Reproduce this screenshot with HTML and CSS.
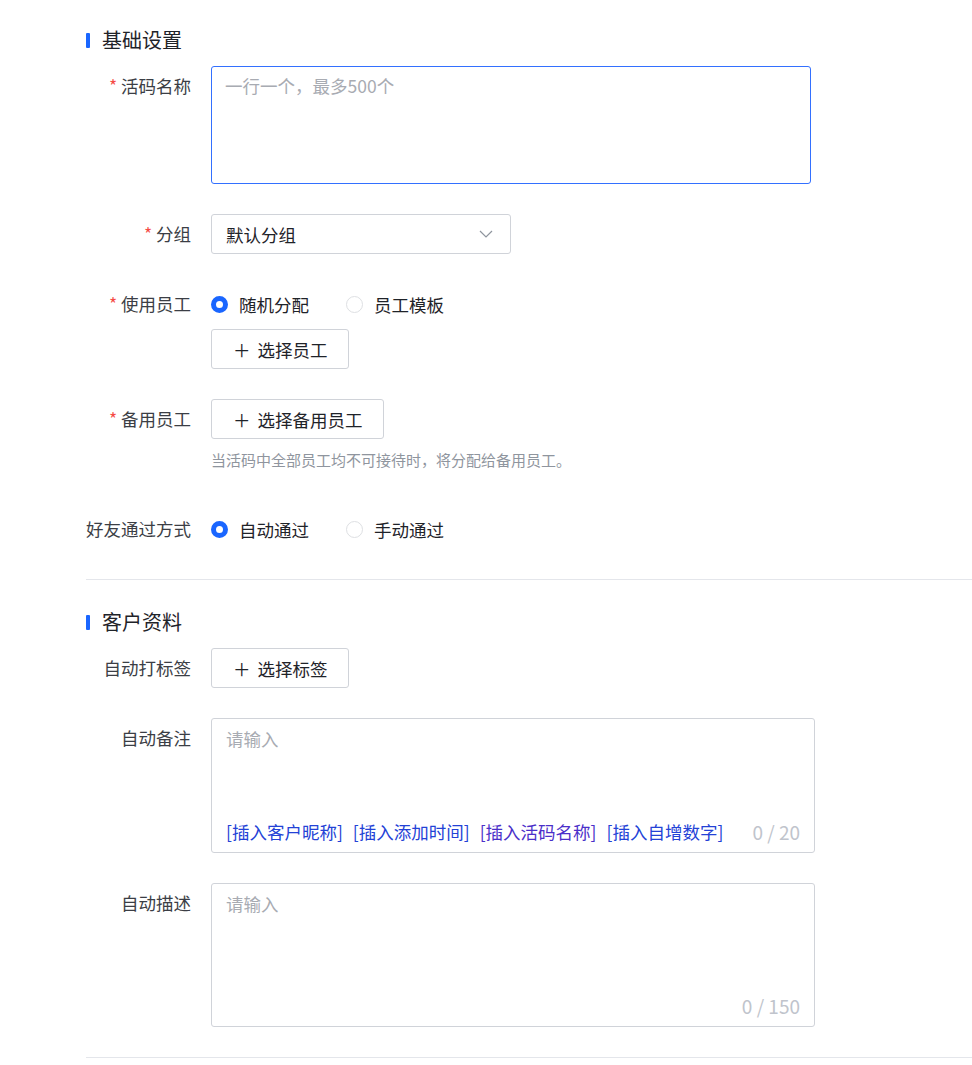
FILE: index.html
```html
<!DOCTYPE html>
<html lang="zh-CN">
	<head>
		<meta charset="UTF-8" />
		<meta name="viewport" content="width=device-width, initial-scale=1.0" />
		<title>活码设置</title>
		<link rel="stylesheet" href="styles.css">
	</head>

	<body>
		<div class="page">
			<!-- 基础设置 -->
			<div class="section-title">基础设置</div>

			<div class="form-item">
				<label class="form-label"><span class="required">*</span> 活码名称</label>
				<div class="form-control">
					<div class="text-box name-box">
						<textarea class="box-input name-input" placeholder="一行一个，最多500个"></textarea>
					</div>
				</div>
			</div>

			<div class="form-item">
				<label class="form-label"><span class="required">*</span> 分组</label>
				<div class="form-control">
					<div class="select">
						<span>默认分组</span>
						<svg class="select-arrow" width="14" height="8" viewBox="0 0 14 8">
							<path d="M1 1 L7 7 L13 1" fill="none" stroke="#8f959e" stroke-width="1.2" />
						</svg>
					</div>
				</div>
			</div>

			<div class="form-item">
				<label class="form-label"><span class="required">*</span> 使用员工</label>
				<div class="form-control">
					<div class="radio-group">
						<label class="radio checked"><span class="radio-dot"></span>随机分配</label>
						<label class="radio"><span class="radio-dot"></span>员工模板</label>
					</div>
					<button class="btn btn-stacked"><span class="plus">＋</span>选择员工</button>
				</div>
			</div>

			<div class="form-item item-help">
				<label class="form-label"><span class="required">*</span> 备用员工</label>
				<div class="form-control">
					<button class="btn"><span class="plus">＋</span>选择备用员工</button>
					<div class="help">当活码中全部员工均不可接待时，将分配给备用员工。</div>
				</div>
			</div>

			<div class="form-item">
				<label class="form-label">好友通过方式</label>
				<div class="form-control">
					<div class="radio-group">
						<label class="radio checked"><span class="radio-dot"></span>自动通过</label>
						<label class="radio"><span class="radio-dot"></span>手动通过</label>
					</div>
				</div>
			</div>

			<div class="divider"></div>

			<!-- 客户资料 -->
			<div class="section-title">客户资料</div>

			<div class="form-item">
				<label class="form-label">自动打标签</label>
				<div class="form-control">
					<button class="btn"><span class="plus">＋</span>选择标签</button>
				</div>
			</div>

			<div class="form-item">
				<label class="form-label">自动备注</label>
				<div class="form-control">
					<div class="text-box">
						<textarea class="box-input remark-input" placeholder="请输入"></textarea>
						<div class="box-footer">
							<div class="insert-links">
								<a class="insert">[插入客户昵称]</a>
								<a class="insert">[插入添加时间]</a>
								<a class="insert visited">[插入活码名称]</a>
								<a class="insert">[插入自增数字]</a>
							</div>
							<span class="count">0 / 20</span>
						</div>
					</div>
				</div>
			</div>

			<div class="form-item">
				<label class="form-label">自动描述</label>
				<div class="form-control">
					<div class="text-box">
						<textarea class="box-input desc-input" placeholder="请输入"></textarea>
						<div class="box-footer footer-end">
							<span class="count">0 / 150</span>
						</div>
					</div>
				</div>
			</div>

			<div class="divider"></div>
		</div>
	</body>
</html>
```

FILE: styles.css
```css
body {
	margin: 0;
	background: #fff;
	font-family: "Noto Sans CJK SC", "Noto Sans", sans-serif;
	color: #1f2329;
}

.page {
	padding: 27px 0 0 86px;
}

.section-title {
	display: flex;
	align-items: center;
	gap: 12px;
	font-size: 20px;
	line-height: 26px;
	color: #1f2329;
	margin-bottom: 13px;
}

.section-title::before {
	content: "";
	width: 4px;
	height: 15px;
	background: #1a66ff;
	border-radius: 1px;
}

.form-item {
	display: flex;
	margin-bottom: 30px;
}

.item-help {
	margin-bottom: 38px;
}

.form-label {
	width: 125px;
	flex-shrink: 0;
	box-sizing: border-box;
	padding-right: 20px;
	text-align: right;
	font-size: 17.5px;
	line-height: 40px;
	color: #3b3e45;
	white-space: nowrap;
}

.required {
	color: #f54a45;
}

.form-control {
	display: flex;
	flex-direction: column;
	align-items: flex-start;
}

.select {
	width: 300px;
	height: 40px;
	box-sizing: border-box;
	padding: 0 17px 0 14px;
	border: 1px solid #d0d3d9;
	border-radius: 3px;
	display: flex;
	align-items: center;
	justify-content: space-between;
	font-size: 17.5px;
	color: #1f2329;
}

.select-arrow {
	display: block;
}

/* radios */
.radio-group {
	display: flex;
	align-items: center;
	height: 40px;
}

.radio {
	display: flex;
	align-items: center;
	gap: 11px;
	margin-right: 37px;
	font-size: 17.5px;
	color: #1f2329;
}

.radio-dot {
	width: 17px;
	height: 17px;
	box-sizing: border-box;
	border: 1px solid #dee0e3;
	border-radius: 50%;
	background: #fff;
}

.radio.checked .radio-dot {
	border: 5px solid #1a66ff;
}

/* buttons */
.btn {
	height: 40px;
	box-sizing: border-box;
	padding: 0 20px 0 21px;
	border: 1px solid #d0d3d9;
	border-radius: 3px;
	background: #fff;
	display: flex;
	align-items: center;
	font-family: inherit;
	font-size: 17.5px;
	color: #1f2329;
}

.btn-stacked {
	margin-top: 5px;
}

.plus {
	font-size: 17.5px;
	margin-right: 7px;
	color: #1f2329;
}

.help {
	margin-top: 10px;
	font-size: 15px;
	line-height: 22px;
	color: #8f959e;
}

.divider {
	height: 1px;
	background: #e4e6eb;
	margin-bottom: 29px;
}

/* textarea boxes */
.text-box {
	width: 604px;
	box-sizing: border-box;
	border: 1px solid #d0d3d9;
	border-radius: 3px;
	padding: 7px 14px 7px 14px;
}

.name-box {
	width: 600px;
	height: 118px;
	padding: 6px 13px;
	border-color: #3370ff;
}

.box-input {
	display: block;
	width: 100%;
	border: none;
	padding: 0;
	outline: none;
	resize: none;
	overflow: hidden;
	font-family: inherit;
	font-size: 17.5px;
	line-height: 26px;
}

.box-input::placeholder {
	color: #a8abb2;
}

.name-input {
	height: 100%;
}

.remark-input {
	height: 93px;
}

.desc-input {
	height: 102px;
}

.box-footer {
	display: flex;
	align-items: center;
	justify-content: space-between;
	line-height: 26px;
}

.footer-end {
	justify-content: flex-end;
}

.insert-links {
	display: flex;
	gap: 10px;
}

.insert {
	font-size: 17.5px;
	color: #2342d6;
	cursor: pointer;
}

.insert.visited {
	color: #4b2fc9;
}

.count {
	font-size: 19px;
	color: #c0c4cc;
}
```
